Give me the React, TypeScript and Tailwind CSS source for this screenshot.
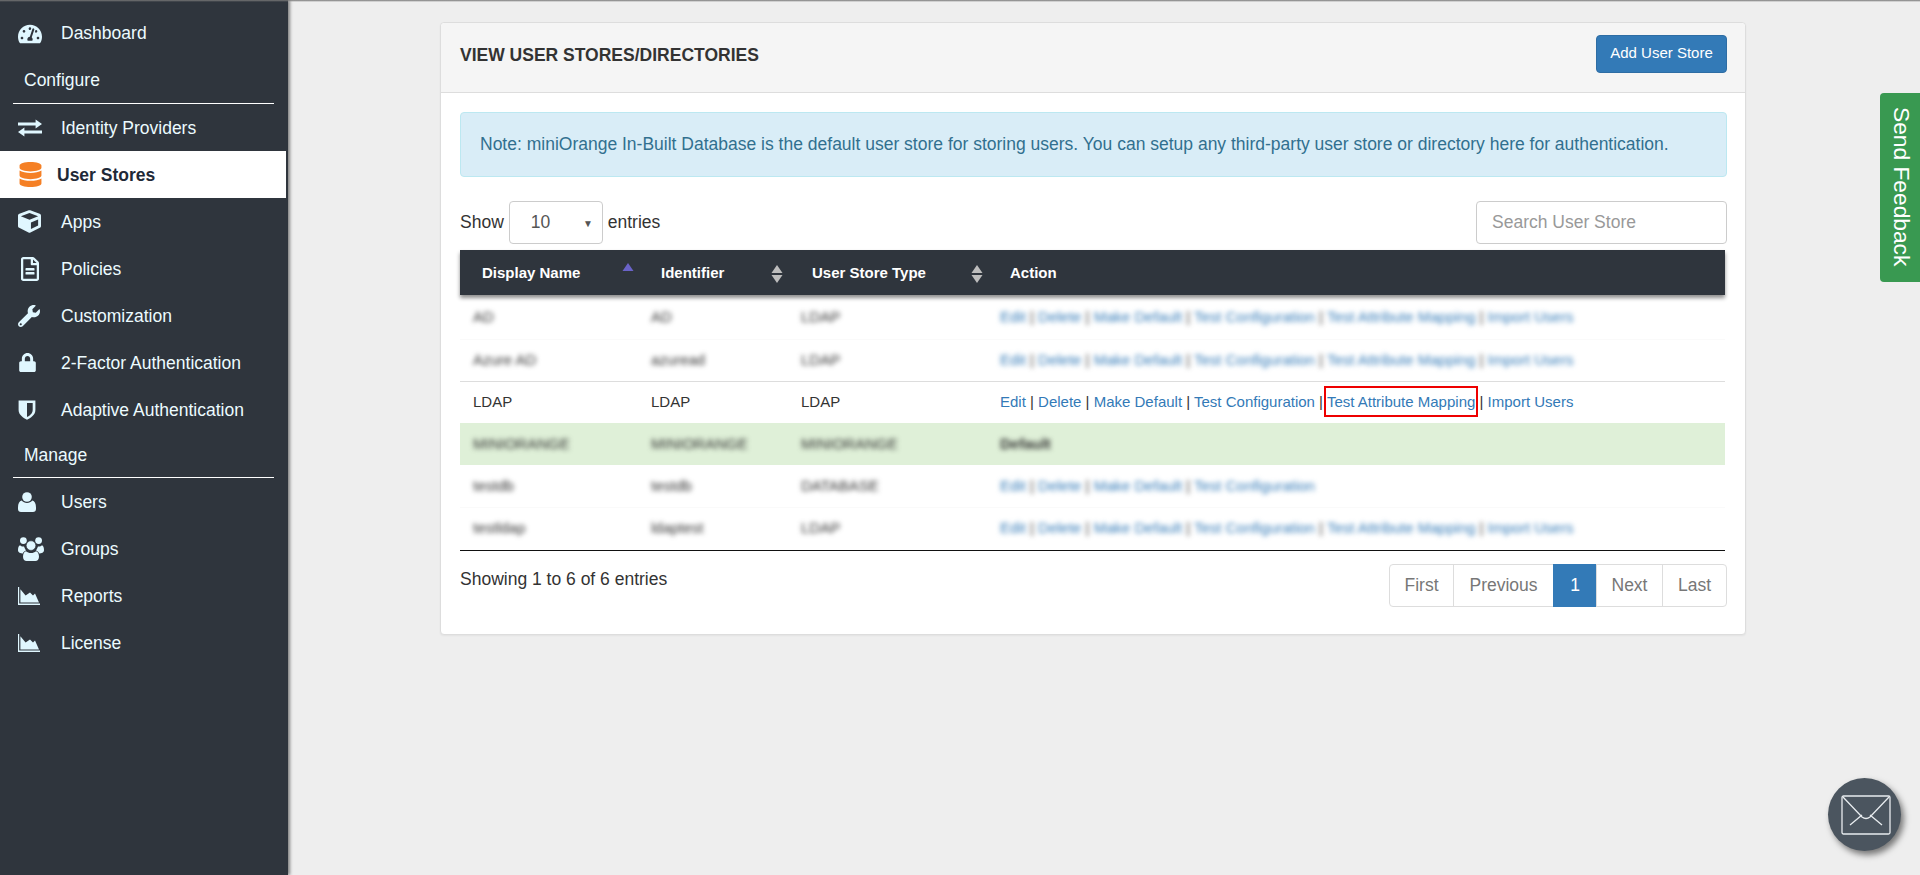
import React from "react";
import { FaTachometerAlt, FaDatabase, FaCube, FaRegFileAlt, FaWrench, FaLock } from "react-icons/fa";

function ExchangeIcon() {
  return (
    <svg viewBox="0 0 24 18" className="h-[18px] w-[24px]" fill="currentColor">
      <path d="M0 3.6h17.6V0.4L24 5l-6.4 4.6V6.4H0z" />
      <path d="M24 11.6H6.4V8.4L0 13l6.4 4.6v-3.2H24z" />
    </svg>
  );
}
function ShieldIcon() {
  return (
    <svg viewBox="0 0 18 20" className="h-[20px] w-[18px]">
      <path d="M0.6 0.6H17.4V10C17.4 15 12.5 18 9 19.8 5.5 18 0.6 15 0.6 10Z" fill="currentColor" />
      <path d="M9 3H14.7V10C14.7 13.4 11.5 15.8 9 17Z" fill="#2f353d" />
    </svg>
  );
}
function UserIcon() {
  return (
    <svg viewBox="0 0 18 20" className="h-[20px] w-[18px]" fill="currentColor">
      <circle cx="9" cy="5" r="4.8" />
      <path d="M3.6 8.6C5 10.2 6.8 11 9 11s4-0.8 5.4-2.4C16.6 9.2 18 11.4 18 15.4V17c0 1.8-1.2 3-3 3H3c-1.8 0-3-1.2-3-3v-1.6C0 11.4 1.4 9.2 3.6 8.6Z" />
    </svg>
  );
}
function GroupIcon() {
  return (
    <svg viewBox="0 0 26 24" className="h-[24px] w-[26px]" fill="currentColor">
      <circle cx="5.4" cy="3.6" r="3.4" />
      <circle cx="20.6" cy="3.6" r="3.4" />
      <path d="M2 8.2C3 9.4 4.6 9.6 6 9.4 6.8 11 7.2 12.4 8 13.4 6.4 14 5.2 15 4.8 16.6 2.4 16.4 0 15.6 0 13.6 0 11 0.4 9 2 8.2Z" />
      <path d="M24 8.2C23 9.4 21.4 9.6 20 9.4 19.2 11 18.8 12.4 18 13.4 19.6 14 20.8 15 21.2 16.6 23.6 16.4 26 15.6 26 13.6 26 11 25.6 9 24 8.2Z" />
      <circle cx="13" cy="8.6" r="4.8" stroke="#2f353d" strokeWidth="0.6" />
      <path d="M8 14.2C9.4 15.4 11 16 13 16s3.6-0.6 5-1.8c1.8 0.4 3 2.6 3 5.6 0 2.8-1.6 4.2-3.6 4.2H8.6C6.6 24 5 22.6 5 19.8c0-3 1.2-5.2 3-5.6Z" />
    </svg>
  );
}
function AreaIcon() {
  return (
    <svg viewBox="0 0 22 18" className="h-[18px] w-[22px]" fill="currentColor">
      <path d="M0 0H1.2V16.6H22V18H0Z" />
      <path d="M2.4 15.4V2.2L7.6 8.6 12 5.4 15 8.6 17 6.6 21 15.4Z" />
    </svg>
  );
}

function NavItem({ icon, label, first }: { icon: React.ReactNode; label: string; first?: boolean }) {
  return (
    <div className="flex h-[47px] items-center pl-[18px]">
      <span className="flex w-[43px] items-center text-[#e0f7ff]">{icon}</span>
      <span className={first ? "text-[17.5px] text-[#ecfbff]" : "pt-[2px] text-[17.5px] text-[#ecfbff]"}>{label}</span>
    </div>
  );
}

function SectionHead({ label }: { label: string }) {
  return (
    <div className="mx-[13px] flex h-[47px] w-[261px] items-center border-b border-white pl-[11px] text-[17.5px] text-[#ecfbff]">
      {label}
    </div>
  );
}

function Sort({ active }: { active?: boolean }) {
  return (
    <svg viewBox="0 0 12 20" className="h-[20px] w-[12px]">
      <path d="M6 1 L11.5 9 H0.5 Z" fill={active ? "#6a63c8" : "#bdbdbd"} />
      {!active && <path d="M6 19 L11.5 11 H0.5 Z" fill="#bdbdbd" />}
    </svg>
  );
}

type Row = { name: string; id: string; type: string; kind: "full" | "short" | "default"; blur: boolean; h: string; green?: boolean; line?: string };
const rows: Row[] = [
  { name: "AD", id: "AD", type: "LDAP", kind: "full", blur: true, h: "h-[44px]", line: "border-[#fafafa]" },
  { name: "Azure AD", id: "azuread", type: "LDAP", kind: "full", blur: true, h: "h-[42px]", line: "border-[#dddddd]" },
  { name: "LDAP", id: "LDAP", type: "LDAP", kind: "full", blur: false, h: "h-[42px]", line: "border-transparent" },
  { name: "MINIORANGE", id: "MINIORANGE", type: "MINIORANGE", kind: "default", blur: true, h: "h-[42px]", green: true, line: "border-transparent" },
  { name: "testdb", id: "testdb", type: "DATABASE", kind: "short", blur: true, h: "h-[42px]", line: "border-[#fafafa]" },
  { name: "testldap", id: "ldaptest", type: "LDAP", kind: "full", blur: true, h: "h-[42px]", line: "border-transparent" },
];

function Actions({ kind, highlight }: { kind: Row["kind"]; highlight?: boolean }) {
  if (kind === "default") return <b className="text-[#333]">Default</b>;
  const L = ({ t }: { t: string }) => <a className="text-[#337ab7]">{t}</a>;
  return (
    <span className="relative text-[#333]">
      <L t="Edit" /> | <L t="Delete" /> | <L t="Make Default" /> | <L t="Test Configuration" />
      {kind === "full" && (
        <>
          {" | "}
          <span className="relative">
            <L t="Test Attribute Mapping" />
            {highlight && <span className="absolute -left-[3px] -right-[3px] -top-[7px] -bottom-[7px] border-2 border-[#ee0000]" />}
          </span>
          {" | "}
          <L t="Import Users" />
        </>
      )}
    </span>
  );
}

export default function App() {
  const cell = (blur: boolean) => (blur ? "inline-block pt-[1px] blur-[2.5px]" : "");
  return (
    <div className="relative flex h-[875px] overflow-hidden bg-[#eeeeee] font-['Liberation_Sans',Arial,sans-serif] text-[#333]">
      <aside className="w-[288px] shrink-0 bg-[#2f353d] pt-[10px] shadow-[2px_0_3px_rgba(0,0,0,0.45)]">
        <NavItem first icon={<FaTachometerAlt size={24} />} label="Dashboard" />
        <SectionHead label="Configure" />
        <NavItem icon={<ExchangeIcon />} label="Identity Providers" />
        <div className="flex h-[47px] w-[286px] items-center bg-white pl-[18px]">
          <span className="flex w-[39px] items-center text-[#f58025]"><FaDatabase size={25} /></span>
          <span className="pt-[2px] text-[17.5px] font-bold text-[#1f2937]">User Stores</span>
        </div>
        <NavItem icon={<FaCube size={23} />} label="Apps" />
        <NavItem icon={<FaRegFileAlt size={24} />} label="Policies" />
        <NavItem icon={<FaWrench size={22} />} label="Customization" />
        <NavItem icon={<FaLock size={19} />} label="2-Factor Authentication" />
        <NavItem icon={<ShieldIcon />} label="Adaptive Authentication" />
        <div className="mx-[13px] flex h-[45px] w-[261px] items-center border-b border-white pl-[11px] text-[17.5px] text-[#ecfbff]">Manage</div>
        <NavItem icon={<UserIcon />} label="Users" />
        <NavItem icon={<GroupIcon />} label="Groups" />
        <NavItem icon={<AreaIcon />} label="Reports" />
        <NavItem icon={<AreaIcon />} label="License" />
      </aside>

      <main className="flex-1 pl-[152px] pt-[22px]">
        <section className="h-[613px] w-[1306px] rounded border border-[#dddddd] bg-white shadow-[0_1px_2px_rgba(0,0,0,0.05)]">
          <header className="flex h-[70px] items-center justify-between rounded-t border-b border-[#dddddd] bg-[#f5f5f5] pb-[8px] pl-[19px] pr-[18px]">
            <h1 className="mt-[4px] text-[17.5px] font-bold text-[#333]">VIEW USER STORES/DIRECTORIES</h1>
            <button className="h-[38px] w-[131px] rounded border border-[#2e6da4] bg-[#337ab7] text-[15px] text-white">Add User Store</button>
          </header>
          <div className="pl-[19px] pr-[18px] pt-[19px]">
            <div className="flex h-[65px] items-center rounded border border-[#bce8f1] bg-[#d9edf7] pb-[1px] pl-[19px] text-[17.5px] text-[#31708f]">
              Note: miniOrange In-Built Database is the default user store for storing users. You can setup any third-party user store or directory here for authentication.
            </div>
            <div className="mt-[24px] flex h-[43px] items-center justify-between text-[17.5px]">
              <div className="flex items-center">
                <span>Show</span>
                <div className="relative ml-[5px] mr-[5px] flex h-[43px] w-[94px] items-center rounded border border-[#cccccc] pl-[21px] text-[#555]">
                  10
                  <span className="absolute right-[9px] top-[14px] text-[10px] text-[#555]">▼</span>
                </div>
                <span>entries</span>
              </div>
              <div className="flex h-[43px] w-[251px] items-center rounded border border-[#cccccc] pl-[15px] text-[#999]">Search User Store</div>
            </div>
            <table className="mt-[6px] w-[1265px] table-fixed border-collapse text-[15px]">
              <colgroup>
                <col className="w-[178px]" />
                <col className="w-[150px]" />
                <col className="w-[199px]" />
                <col />
              </colgroup>
              <thead>
                <tr className="h-[45px] bg-[#2f353d] font-bold text-white shadow-[0_3px_4px_rgba(0,0,0,0.45)]">
                  <th className="pt-[2px] text-left"><div className="flex items-center justify-between pl-[22px] pr-[4px]"><span>Display Name</span><span className="-mt-[4px]"><Sort active /></span></div></th>
                  <th className="pt-[2px] text-left"><div className="flex items-center justify-between pl-[23px] pr-[5px]"><span>Identifier</span><Sort /></div></th>
                  <th className="pt-[2px] text-left"><div className="flex items-center justify-between pl-[24px] pr-[4px]"><span>User Store Type</span><Sort /></div></th>
                  <th className="pl-[23px] pt-[2px] text-left">Action</th>
                </tr>
              </thead>
              <tbody>
                {rows.map((r, i) => (
                  <tr key={i} className={`${r.h} border-b ${r.line} ${r.green ? "bg-[#dff0d8]" : ""}`}>
                    <td className="pl-[13px]"><span className={cell(r.blur)}>{r.name}</span></td>
                    <td className="pl-[13px]"><span className={cell(r.blur)}>{r.id}</span></td>
                    <td className="pl-[13px]"><span className={cell(r.blur)}>{r.type}</span></td>
                    <td className="pl-[13px]"><span className={cell(r.blur)}><Actions kind={r.kind} highlight={!r.blur} /></span></td>
                  </tr>
                ))}
              </tbody>
            </table>
            <div className="h-[1.5px] w-[1265px] bg-[#111]" />
            <div className="mt-[13px] flex items-start justify-between text-[17.5px]">
              <span className="mt-[2px]">Showing 1 to 6 of 6 entries</span>
              <nav className="flex h-[43px] text-[#777]">
                <span className="flex w-[65px] items-center justify-center rounded-l border border-[#dddddd]">First</span>
                <span className="-ml-px flex w-[101px] items-center justify-center border border-[#dddddd]">Previous</span>
                <span className="-ml-px flex w-[44px] items-center justify-center border border-[#337ab7] bg-[#337ab7] text-white">1</span>
                <span className="-ml-px flex w-[67px] items-center justify-center border border-[#dddddd]">Next</span>
                <span className="-ml-px flex w-[65px] items-center justify-center rounded-r border border-[#dddddd]">Last</span>
              </nav>
            </div>
          </div>
        </section>
      </main>

      <div className="pointer-events-none absolute inset-x-0 top-0 h-[2px] bg-gradient-to-b from-[#777] to-transparent" />

      <div className="absolute right-0 top-[93px] flex h-[189px] w-[40px] items-center justify-center rounded-l bg-[#399951] pb-[2px] pl-[4px] text-[22.75px] text-white [writing-mode:vertical-rl]">
        Send Feedback
      </div>
      <div className="absolute left-[1828px] top-[778px] flex h-[73px] w-[73px] items-center justify-center rounded-full bg-[#4b555f] shadow-[3px_4px_6px_rgba(0,0,0,0.5)]">
        <svg viewBox="0 0 50 40" className="ml-[2px] h-[40px] w-[50px]" fill="none" stroke="#e8ecef" strokeWidth="1.3">
          <rect x="1" y="1" width="48" height="38" rx="1.5" />
          <path d="M2 2 L21 22 Q25 25 29 22 L48 2" />
          <path d="M9 30 L21 20 M41 30 L29 20" />
        </svg>
      </div>
    </div>
  );
}
